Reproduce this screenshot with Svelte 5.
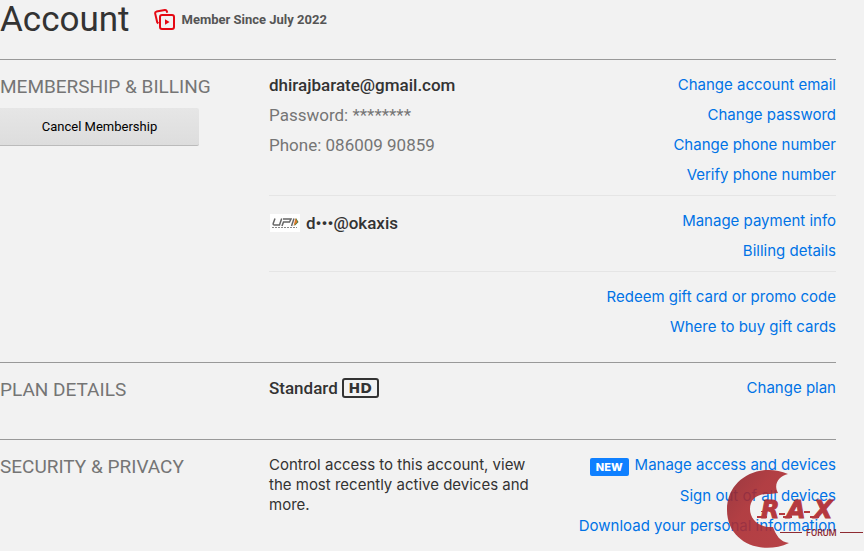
<script lang="ts">
  type Link = { label: string; href: string; isNew?: boolean };

  const accountLinks: Link[] = [
    { label: "Change account email", href: "#email" },
    { label: "Change password", href: "#password" },
    { label: "Change phone number", href: "#phonenumber" },
    { label: "Verify phone number", href: "#verifyphone" },
  ];
  const paymentLinks: Link[] = [
    { label: "Manage payment info", href: "#payment" },
    { label: "Billing details", href: "#billing" },
  ];
  const giftLinks: Link[] = [
    { label: "Redeem gift card or promo code", href: "#redeem" },
    { label: "Where to buy gift cards", href: "#giftcards" },
  ];
  const planLinks: Link[] = [{ label: "Change plan", href: "#plan" }];
  const securityLinks: Link[] = [
    { label: "Manage access and devices", href: "#devices", isNew: true },
    { label: "Sign out of all devices", href: "#signout" },
    { label: "Download your personal information", href: "#download" },
  ];
</script>

{#snippet linkList(links: Link[])}
  <ul class="links">
    {#each links as link}
      <li>
        {#if link.isNew}<span class="badge">NEW</span>{/if}
        <a href={link.href}>{link.label}</a>
      </li>
    {/each}
  </ul>
{/snippet}

<main class="account">
  <header>
    <h1>Account</h1>
    <div class="since">
      <svg width="22" height="22" viewBox="0 0 22 22" fill="none" stroke="#e50914" stroke-width="2" aria-hidden="true">
        <path d="M4.300 14.500 3.200 13.300 1.200 4.600Q.9 3 2.500 2.600L10.800 1.100Q12.400.9 12.900 2.400L13.200 3.800" />
        <rect x="6" y="6" width="14" height="14" rx="2" />
        <path d="M11 10.300v5.400l4.600-2.700z" fill="#e50914" stroke="none" />
      </svg>
      <span>Member Since July 2022</span>
    </div>
  </header>

  <section>
    <div class="side">
      <h2>MEMBERSHIP &amp; BILLING</h2>
      <button type="button">Cancel Membership</button>
    </div>
    <div class="groups">
      <div class="group">
        <div class="info">
          <p class="strong">dhirajbarate@gmail.com</p>
          <p class="muted">Password: ********</p>
          <p class="muted">Phone: 086009 90859</p>
        </div>
        {@render linkList(accountLinks)}
      </div>
      <div class="group">
        <div class="info">
          <p class="strong payment">
            <svg width="30" height="18" viewBox="0 0 30 18" role="img" aria-label="UPI">
              <rect width="30" height="18" fill="#fff" />
              <g fill="none" stroke="#666" stroke-width="1.500">
                <path d="M5 4.500 3.200 9.500Q3 11 4.300 11H9.500L11.700 4.500" />
                <path d="M12 12 13.500 8H19.500L21 5H13" />
                <path d="M24 4.500 21.500 12" />
              </g>
              <path d="M26 4 28.500 8 24.500 12z" fill="#3b7a45" />
              <path d="M25.500 4 27.500 8 23.500 12z" fill="#dc7828" />
              <path d="M2 13.500h25" stroke="#888" stroke-dasharray="2 1" />
            </svg>
            <span>d•••@okaxis</span>
          </p>
        </div>
        {@render linkList(paymentLinks)}
      </div>
      <div class="group">
        <div class="info"></div>
        {@render linkList(giftLinks)}
      </div>
    </div>
  </section>

  <section>
    <div class="side"><h2>PLAN DETAILS</h2></div>
    <div class="groups">
      <div class="group short">
        <div class="info">
          <p class="strong plan">Standard <span class="hd">HD</span></p>
        </div>
        {@render linkList(planLinks)}
      </div>
    </div>
  </section>

  <section class="last">
    <div class="side"><h2>SECURITY &amp; PRIVACY</h2></div>
    <div class="groups">
      <div class="group">
        <div class="info">
          <p class="about">Control access to this account, view the most recently active devices and more.</p>
        </div>
        {@render linkList(securityLinks)}
      </div>
    </div>
  </section>

  <svg class="watermark" width="144" height="86" viewBox="0 0 144 86" role="img" aria-label="Crax Forum">
    <defs>
      <linearGradient id="moon" x1="0" y1="0" x2="1" y2="1">
        <stop offset="0" stop-color="#8f252d" />
        <stop offset=".4" stop-color="#ab2b30" />
        <stop offset="1" stop-color="#b02e33" />
      </linearGradient>
    </defs>
    <path
      d="M68 10C40-2 7 14 7 46C7 78 41 92 69 79C60 78 56 71 53 63C40 64 30 56 30 45C30 35 38 29 50 30L58 29C53 20 59 12 68 10Z"
      fill="url(#moon)"
      opacity=".9"
    />
    <g fill="#b02a30" opacity=".92">
      <text class="rax" x="41" y="54">R</text>
      <text class="rax" x="67" y="54">A</text>
      <text class="rax" x="94" y="54">X</text>
      <path d="M37 52h10v2H37zM63 52h9v2h-9zM90 52h9v2h-9zM41 47h6v1h-6zM59 49h6v2h-6zM84 47h6v2h-6z" />
    </g>
    <path d="M60 68.500h22M120 68.500h23" stroke="#8e2b32" />
    <text class="forum" x="86" y="72">FORUM</text>
  </svg>
</main>

<style>
  :global(body) {
    margin: 0;
    background: #f2f2f2;
  }

  .account {
    position: relative;
    padding-right: 28px;
    overflow: hidden;
    color: #333;
    font-family: Roboto, "Liberation Sans", sans-serif;
    font-size: 17px;
    line-height: 20px;
  }

  h1, h2, p, ul {
    margin: 0;
    padding: 0;
    font-weight: 400;
  }

  header {
    display: flex;
    align-items: center;
    gap: 24px;
    height: 39px;
    padding-bottom: 20px;
  }
  h1 {
    font-size: 35px;
    line-height: 39px;
  }
  .since {
    display: flex;
    align-items: center;
    gap: 6px;
    color: #555;
    font-size: 13px;
    font-weight: 700;
  }

  section {
    display: grid;
    grid-template-columns: 269px 1fr;
    padding: 15px 0;
    border-top: 1px solid #999;
  }
  section.last {
    padding-bottom: 4px;
  }
  h2 {
    color: #757575;
    font-size: 19px;
    line-height: 24px;
  }
  button {
    width: 199px;
    height: 38px;
    margin-top: 9px;
    border: 0;
    border-bottom: 1px solid #bbb;
    border-radius: 0 2px 2px 0;
    background: linear-gradient(#e6e6e6, #ddd);
    color: #000;
    font-family: inherit;
    font-size: 13px;
    cursor: pointer;
  }

  .group {
    display: flex;
    justify-content: space-between;
    padding-bottom: 10px;
  }
  .group + .group {
    padding-top: 15px;
    border-top: 1px solid #e5e5e5;
  }
  .group.short {
    min-height: 36px;
  }
  .info {
    display: flex;
    flex: 0 1 280px;
    flex-direction: column;
    gap: 10px;
  }
  .strong {
    font-weight: 500;
  }
  .muted {
    color: #757575;
  }
  .payment,
  .plan {
    display: flex;
    align-items: center;
    gap: 4px;
  }
  .payment {
    gap: 6px;
    padding: 2px 0 0 1px;
  }
  .hd {
    box-sizing: border-box;
    width: 37px;
    height: 20px;
    border: 2px solid #333;
    border-radius: 3px;
    font-family: "DejaVu Sans", sans-serif;
    font-size: 14px;
    font-weight: 700;
    line-height: 16px;
    text-align: center;
  }

  .about,
  .links {
    font-family: Inter, Roboto, sans-serif;
    font-size: 15px;
  }
  .about {
    max-width: 270px;
  }
  .links {
    display: flex;
    flex-direction: column;
    gap: 10px;
    list-style: none;
    text-align: right;
    white-space: nowrap;
  }
  .links li {
    display: flex;
    align-items: flex-start;
    justify-content: flex-end;
    gap: 6px;
  }
  a {
    color: #0073e6;
    text-decoration: none;
  }
  a:hover {
    text-decoration: underline;
  }
  .badge {
    margin-top: 3px;
    padding: 0 6px;
    border-radius: 2px;
    background: #0f80ff;
    color: #fff;
    font-size: 11px;
    font-weight: 800;
    line-height: 18px;
  }

  .watermark {
    position: absolute;
    right: 0;
    bottom: 0;
    pointer-events: none;
  }
  .rax {
    stroke: #b02a30;
    font: italic 700 24px "DejaVu Sans", sans-serif;
  }
  .forum {
    fill: #8e2b32;
    font: 500 9px Roboto, sans-serif;
  }
</style>
